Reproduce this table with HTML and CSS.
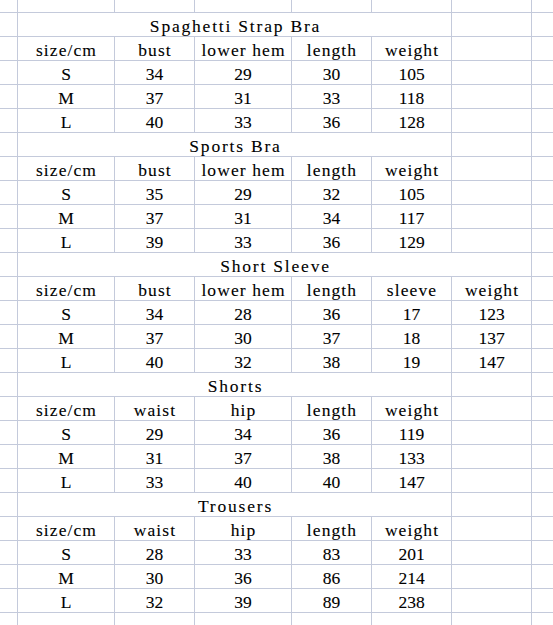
FILE: index.html
```html
<!DOCTYPE html>
<html>
<head>
<meta charset="utf-8">
<link rel="stylesheet" href="styles.css">
</head>
<body>
<div class="sheet">
  <!-- partial top row -->
  <div class="c top"></div><div class="c top"></div><div class="c top"></div><div class="c top"></div><div class="c top"></div><div class="c top"></div><div class="c top"></div><div class="c top last"></div>

  <!-- Spaghetti Strap Bra -->
  <div class="c"></div><div class="c title span5">Spaghetti Strap Bra</div><div class="c"></div><div class="c last"></div>
  <div class="c"></div><div class="c w">size/cm</div><div class="c w">bust</div><div class="c w">lower hem</div><div class="c w">length</div><div class="c w">weight</div><div class="c"></div><div class="c last"></div>
  <div class="c"></div><div class="c">S</div><div class="c">34</div><div class="c">29</div><div class="c">30</div><div class="c">105</div><div class="c"></div><div class="c last"></div>
  <div class="c"></div><div class="c">M</div><div class="c">37</div><div class="c">31</div><div class="c">33</div><div class="c">118</div><div class="c"></div><div class="c last"></div>
  <div class="c"></div><div class="c">L</div><div class="c">40</div><div class="c">33</div><div class="c">36</div><div class="c">128</div><div class="c"></div><div class="c last"></div>

  <!-- Sports Bra -->
  <div class="c"></div><div class="c title span5">Sports Bra</div><div class="c"></div><div class="c last"></div>
  <div class="c"></div><div class="c w">size/cm</div><div class="c w">bust</div><div class="c w">lower hem</div><div class="c w">length</div><div class="c w">weight</div><div class="c"></div><div class="c last"></div>
  <div class="c"></div><div class="c">S</div><div class="c">35</div><div class="c">29</div><div class="c">32</div><div class="c">105</div><div class="c"></div><div class="c last"></div>
  <div class="c"></div><div class="c">M</div><div class="c">37</div><div class="c">31</div><div class="c">34</div><div class="c">117</div><div class="c"></div><div class="c last"></div>
  <div class="c"></div><div class="c">L</div><div class="c">39</div><div class="c">33</div><div class="c">36</div><div class="c">129</div><div class="c"></div><div class="c last"></div>

  <!-- Short Sleeve -->
  <div class="c"></div><div class="c title span6">Short Sleeve</div><div class="c last"></div>
  <div class="c"></div><div class="c w">size/cm</div><div class="c w">bust</div><div class="c w">lower hem</div><div class="c w">length</div><div class="c w">sleeve</div><div class="c w">weight</div><div class="c last"></div>
  <div class="c"></div><div class="c">S</div><div class="c">34</div><div class="c">28</div><div class="c">36</div><div class="c">17</div><div class="c">123</div><div class="c last"></div>
  <div class="c"></div><div class="c">M</div><div class="c">37</div><div class="c">30</div><div class="c">37</div><div class="c">18</div><div class="c">137</div><div class="c last"></div>
  <div class="c"></div><div class="c">L</div><div class="c">40</div><div class="c">32</div><div class="c">38</div><div class="c">19</div><div class="c">147</div><div class="c last"></div>

  <!-- Shorts -->
  <div class="c"></div><div class="c title span5">Shorts</div><div class="c"></div><div class="c last"></div>
  <div class="c"></div><div class="c w">size/cm</div><div class="c w">waist</div><div class="c w">hip</div><div class="c w">length</div><div class="c w">weight</div><div class="c"></div><div class="c last"></div>
  <div class="c"></div><div class="c">S</div><div class="c">29</div><div class="c">34</div><div class="c">36</div><div class="c">119</div><div class="c"></div><div class="c last"></div>
  <div class="c"></div><div class="c">M</div><div class="c">31</div><div class="c">37</div><div class="c">38</div><div class="c">133</div><div class="c"></div><div class="c last"></div>
  <div class="c"></div><div class="c">L</div><div class="c">33</div><div class="c">40</div><div class="c">40</div><div class="c">147</div><div class="c"></div><div class="c last"></div>

  <!-- Trousers -->
  <div class="c"></div><div class="c title span5">Trousers</div><div class="c"></div><div class="c last"></div>
  <div class="c"></div><div class="c w">size/cm</div><div class="c w">waist</div><div class="c w">hip</div><div class="c w">length</div><div class="c w">weight</div><div class="c"></div><div class="c last"></div>
  <div class="c"></div><div class="c">S</div><div class="c">28</div><div class="c">33</div><div class="c">83</div><div class="c">201</div><div class="c"></div><div class="c last"></div>
  <div class="c"></div><div class="c">M</div><div class="c">30</div><div class="c">36</div><div class="c">86</div><div class="c">214</div><div class="c"></div><div class="c last"></div>
  <div class="c"></div><div class="c">L</div><div class="c">32</div><div class="c">39</div><div class="c">89</div><div class="c">238</div><div class="c"></div><div class="c last"></div>

  <!-- partial bottom row -->
  <div class="c"></div><div class="c"></div><div class="c"></div><div class="c"></div><div class="c"></div><div class="c"></div><div class="c"></div><div class="c last"></div>
</div>
</body>
</html>
```

FILE: styles.css
```css
html, body {
  margin: 0;
  padding: 0;
  background: #ffffff;
  overflow: hidden;
}

.sheet {
  display: grid;
  grid-template-columns: 18px 97px 80px 97px 80px 80px 80px 1fr;
  grid-template-rows: 13px;
  grid-auto-rows: 24px;
  width: 553px;
  font-family: "Liberation Serif", "Tinos", "Times New Roman", serif;
  font-size: 17.5px;
  color: #000000;
  -webkit-text-stroke: 0.1px #000000;
}

.c {
  box-sizing: border-box;
  border-right: 1px solid #c4cadb;
  border-bottom: 1px solid #c4cadb;
  padding-top: 3px;
  line-height: 20px;
  text-align: center;
  white-space: nowrap;
  overflow: hidden;
}

.c.top {
  padding: 0;
}

.c.last {
  border-right: none;
}

.w {
  letter-spacing: 1.1px;
  padding-left: 1px;
}

.title {
  letter-spacing: 1.8px;
  padding-left: 2px;
}

.span5 {
  grid-column: span 5;
}

.span6 {
  grid-column: span 6;
}
```
